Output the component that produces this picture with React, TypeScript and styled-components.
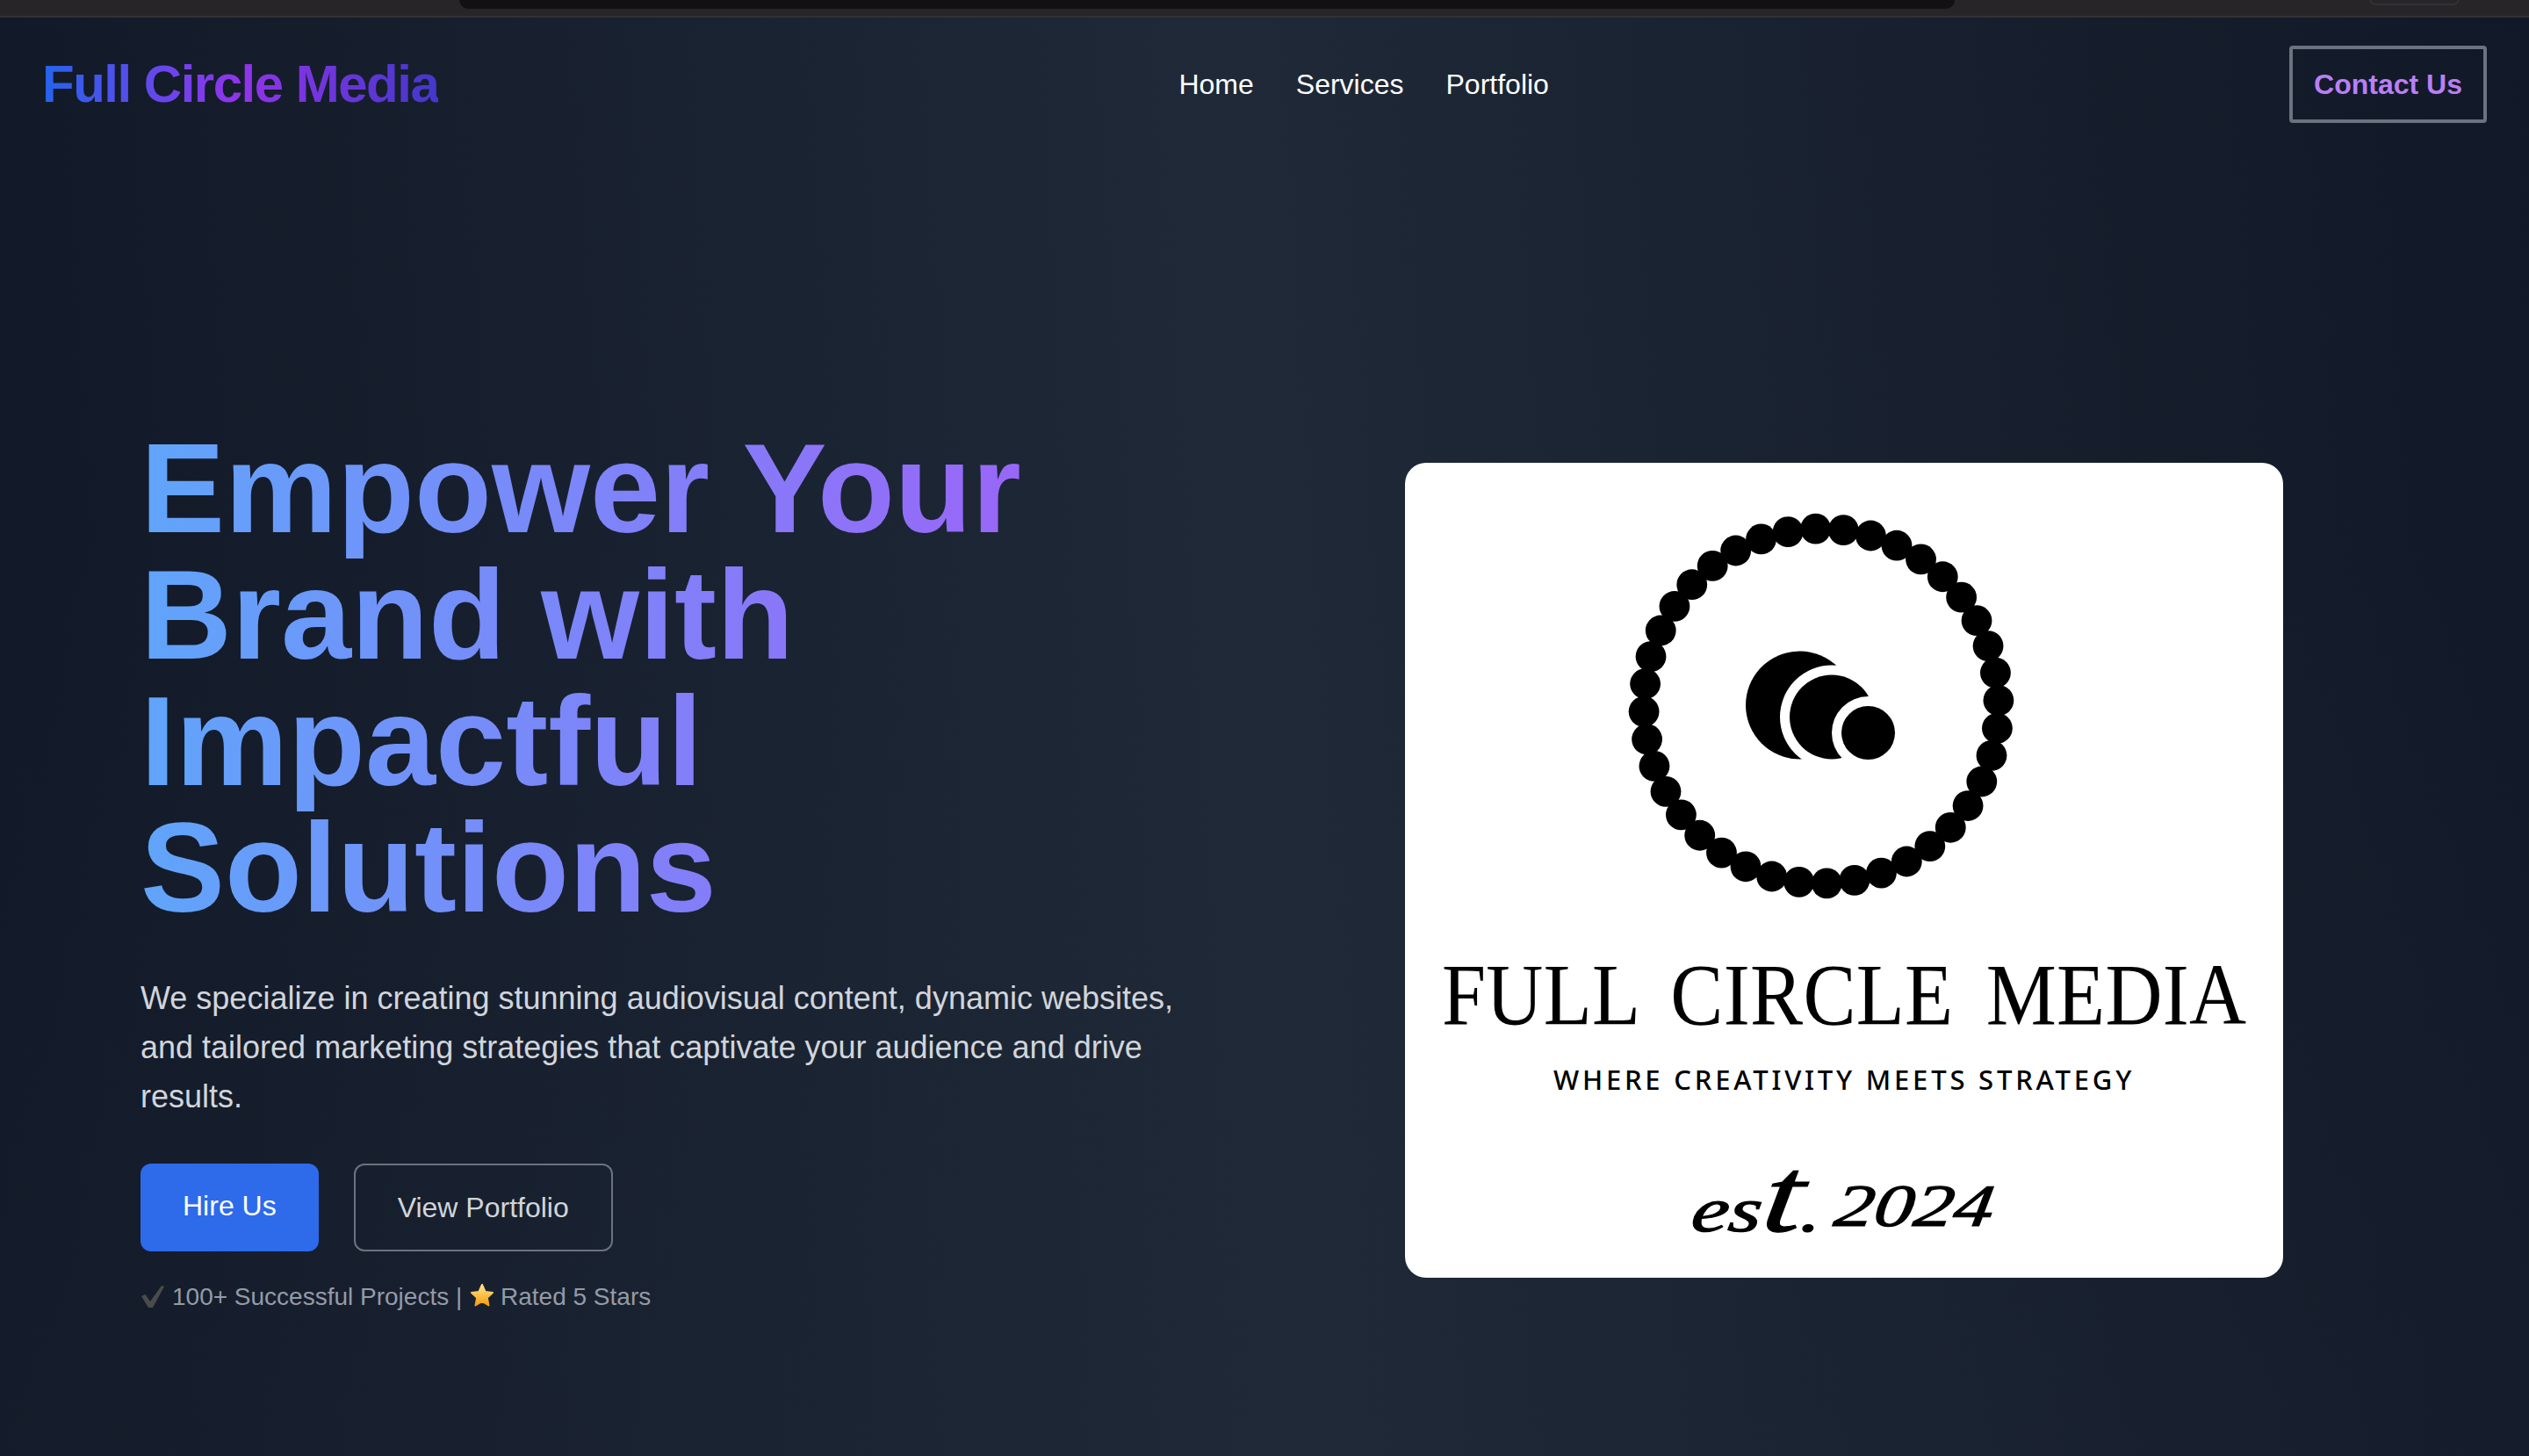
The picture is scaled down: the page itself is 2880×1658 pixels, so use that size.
import React from "react";
import styled, { createGlobalStyle } from "styled-components";

const Global = createGlobalStyle`
  html, body { margin: 0; padding: 0; height: 100%; overflow: hidden; background: #111827; }
  * { box-sizing: border-box; }
  body { font-family: "Liberation Sans", Arial, sans-serif; }
`;

const Page = styled.div`
  height: 100vh;
  overflow: hidden;
  display: flex;
  flex-direction: column;
`;

const Chrome = styled.div`
  position: relative;
  flex: none;
  height: 20px;
  background: #272528;
  border-bottom: 2px solid #333135;
`;

const Notch = styled.div`
  position: absolute;
  top: 0;
  left: 523px;
  width: 1703px;
  height: 10px;
  background: #111113;
  border-radius: 0 0 16px 16px;
`;

const ChromePill = styled.div`
  position: absolute;
  top: -2px;
  left: 2698px;
  width: 103px;
  height: 8px;
  border: 2px solid #333135;
  border-radius: 0 0 10px 10px;
`;

const Surface = styled.div`
  flex: 1;
  min-height: 0;
  background:
    linear-gradient(180deg, rgba(31, 41, 55, 0) 35%, rgba(31, 41, 55, 0.22) 100%),
    linear-gradient(86deg, #111827 0%, #1f2937 50%, #111827 100%);
`;

const Nav = styled.nav`
  display: flex;
  align-items: center;
  justify-content: space-between;
  padding: 32px 48px;
`;

const Brand = styled.div`
  font-size: 60px;
  line-height: 72px;
  font-weight: 700;
  letter-spacing: -1.5px;
  background: linear-gradient(90deg, #2563eb, #9333ea, #4338ca);
  -webkit-background-clip: text;
  background-clip: text;
  color: transparent;
`;

const NavLinks = styled.div`
  display: flex;
  gap: 48px;
`;

const NavLink = styled.a`
  font-size: 32px;
  line-height: 48px;
  color: #fff;
`;

const ContactButton = styled.a`
  display: block;
  padding: 16px 24px;
  border: 4px solid #6b7280;
  border-radius: 4px;
  font-size: 32px;
  line-height: 48px;
  font-weight: 700;
  color: #b97ff3;
`;

const Hero = styled.main`
  display: flex;
  align-items: center;
  gap: 160px;
  padding: 313px 160px;
`;

const HeroCopy = styled.section`
  flex: none;
  width: 1280px;
`;

const Heading = styled.h1`
  margin: 0;
  font-size: 144px;
  line-height: 144px;
  font-weight: 700;
  background: linear-gradient(90deg, #60a5fa, #a855f7);
  -webkit-background-clip: text;
  background-clip: text;
  color: transparent;
`;

const Lede = styled.p`
  margin: 48px 0 0;
  max-width: 1200px;
  font-size: 36px;
  line-height: 56px;
  color: #d1d5db;
`;

const Actions = styled.div`
  display: flex;
  gap: 40px;
  margin-top: 48px;
`;

const ActionButton = styled.a<{ $primary?: boolean }>`
  display: block;
  padding: 24px 48px;
  height: 100px;
  border-radius: 12px;
  font-size: 32px;
  line-height: 48px;
  color: ${(p) => (p.$primary ? "#fff" : "#d1d5db")};
  background: ${(p) => (p.$primary ? "#2d6bea" : "transparent")};
  border: ${(p) => (p.$primary ? "0" : "2px solid #6b7280")};
`;

const Proof = styled.p`
  display: flex;
  align-items: center;
  margin: 32px 0 0;
  font-size: 28px;
  line-height: 40px;
  color: #949ba7;
  white-space: pre;
`;

const CheckIcon = styled.svg`
  flex: none;
  width: 28px;
  height: 28px;
  margin-right: 8px;
`;

const StarIcon = styled.svg`
  flex: none;
  width: 30px;
  height: 30px;
  margin: -4px 6px 0 0;
`;

const LogoCard = styled.aside`
  flex: none;
  width: 1000px;
  height: 928px;
  background: #fff;
  border-radius: 24px;
  display: flex;
  flex-direction: column;
  align-items: center;
  color: #000;
`;

const RingArt = styled.svg`
  display: block;
  flex: none;
  width: 1000px;
  height: 556px;
`;

const Wordmark = styled.div`
  font-family: "Liberation Serif", "Times New Roman", serif;
  font-size: 100px;
  line-height: 100px;
  word-spacing: 16px;
  letter-spacing: 0.4px;
  white-space: nowrap;
  transform: scaleX(0.9);
`;

const Tagline = styled.div`
  margin-top: 26px;
  font-family: "Noto Sans", "Open Sans", sans-serif;
  font-size: 31px;
  line-height: 40px;
  font-weight: 500;
  letter-spacing: 3.8px;
  white-space: nowrap;
`;

const Script = styled.div`
  margin-top: 62px;
  font-family: "Liberation Serif", serif;
  font-style: italic;
  font-size: 72px;
  line-height: 100px;
  white-space: nowrap;
  -webkit-text-stroke: 1.2px #000;
  transform: scaleX(1.33) skewX(-6deg);
`;

const ScriptTall = styled.span`
  font-size: 122px;
`;

const ScriptDigits = styled.span`
  font-size: 68px;
  margin-left: 10px;
  vertical-align: 6px;
`;

const BEAD_COUNT = 40;
const beads = Array.from({ length: BEAD_COUNT }, (_, i) => {
  const a = ((-1.8 + i * 9) * Math.PI) / 180;
  return { cx: 474 + 202 * Math.sin(a), cy: 277 - 202 * Math.cos(a) };
});

export default function App() {
  return (
    <Page>
      <Global />
      <Chrome>
        <Notch />
        <ChromePill />
      </Chrome>
      <Surface>
        <Nav>
          <Brand>Full Circle Media</Brand>
          <NavLinks>
            <NavLink>Home</NavLink>
            <NavLink>Services</NavLink>
            <NavLink>Portfolio</NavLink>
          </NavLinks>
          <ContactButton>Contact Us</ContactButton>
        </Nav>
        <Hero>
          <HeroCopy>
            <Heading>
              Empower Your
              <br />
              Brand with
              <br />
              Impactful
              <br />
              Solutions
            </Heading>
            <Lede>
              We specialize in creating stunning audiovisual content, dynamic websites, and tailored
              marketing strategies that captivate your audience and drive results.
            </Lede>
            <Actions>
              <ActionButton $primary>Hire Us</ActionButton>
              <ActionButton>View Portfolio</ActionButton>
            </Actions>
            <Proof>
              <CheckIcon viewBox="0 0 28 28" aria-hidden="true">
                <path d="M1 13 L5.5 11 L11 19 L24 1 L27 2 L14 26 L9 26 Z" fill="#4b4b4b" />
              </CheckIcon>
              {"100+ Successful Projects | "}
              <StarIcon viewBox="0 0 30 30" aria-hidden="true">
                <defs>
                  <linearGradient id="starFill" x1="0" y1="0" x2="0" y2="1">
                    <stop offset="0" stopColor="#fde68a" />
                    <stop offset="1" stopColor="#f59e0b" />
                  </linearGradient>
                </defs>
                <polygon
                  points="15,3 18.6,11 27,12 20.8,17.8 22.5,26.5 15,22 7.5,26.5 9.2,17.8 3,12 11.4,11"
                  fill="url(#starFill)"
                  stroke="url(#starFill)"
                  strokeWidth="2"
                  strokeLinejoin="round"
                />
              </StarIcon>
              Rated 5 Stars
            </Proof>
          </HeroCopy>
          <LogoCard>
            <RingArt viewBox="0 0 1000 556" aria-hidden="true">
              {beads.map((b, i) => (
                <circle key={i} cx={b.cx} cy={b.cy} r="17.4" fill="#000" />
              ))}
              <circle cx="449.5" cy="276" r="61.5" fill="#000" />
              <circle cx="486" cy="289.5" r="59" fill="#fff" />
              <circle cx="486" cy="289.5" r="48" fill="#000" />
              <circle cx="527.5" cy="307.5" r="41.5" fill="#fff" />
              <circle cx="527.5" cy="307.5" r="30.5" fill="#000" />
            </RingArt>
            <Wordmark>FULL CIRCLE MEDIA</Wordmark>
            <Tagline>WHERE CREATIVITY MEETS STRATEGY</Tagline>
            <Script>
              es<ScriptTall>t</ScriptTall>.<ScriptDigits>2024</ScriptDigits>
            </Script>
          </LogoCard>
        </Hero>
      </Surface>
    </Page>
  );
}
